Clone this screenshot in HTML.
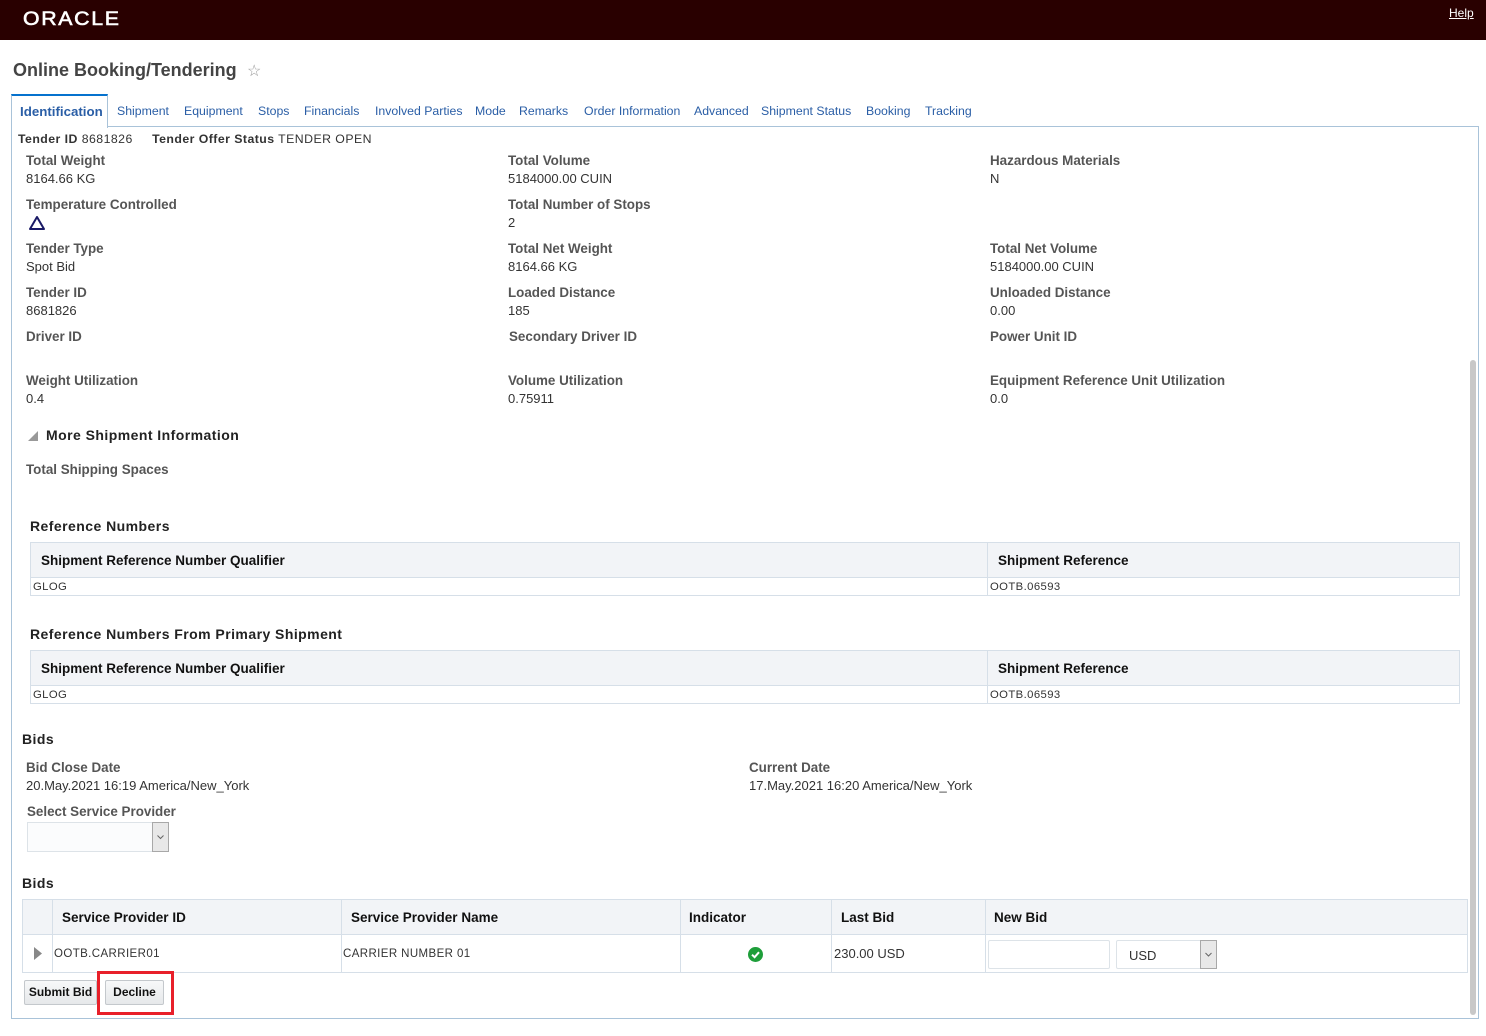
<!DOCTYPE html>
<html><head><meta charset="utf-8"><style>
*{box-sizing:border-box;margin:0;padding:0}
body{width:1486px;height:1036px;background:#fff;font-family:"Liberation Sans",Arial,sans-serif;position:relative;overflow:hidden;color:#333}
.a{position:absolute;white-space:nowrap}
.l{font-size:13.4px;font-weight:bold;color:#555}
.v{font-size:13px;color:#333}
.h{font-size:14px;font-weight:bold;color:#222;letter-spacing:0.45px}
.t{font-size:12.3px;color:#2a5ea6;top:104px}
.tbl{position:absolute;border:1px solid #d6dfe8}
.th{position:absolute;background:#f2f4f7;border-bottom:1px solid #d6dfe8}
.hd{position:absolute;font-size:13.5px;font-weight:bold;color:#111;white-space:nowrap}
.vl{position:absolute;width:1px;background:#d6dfe8;top:0;bottom:0}
.sm{font-size:11.3px;color:#333;letter-spacing:0.4px}
.btn{position:absolute;height:25px;border:1px solid #c4c8cc;background:linear-gradient(#f7f8f9,#e6e8ea);font-size:12px;font-weight:bold;color:#111;text-align:center;line-height:23px;border-radius:2px}
.dd{position:absolute;border:1px solid #a8a8a8;background:#e8e8e8}
</style></head><body>
<div class="a" style="left:0;top:0;width:1486px;height:40px;background:#290000"></div>
<div class="a" style="left:23px;top:9px;color:#fff;font-size:19px;letter-spacing:1.5px;transform:scaleX(1.12);transform-origin:left;-webkit-text-stroke:0.6px #fff">ORACLE</div>
<div class="a" style="left:1449px;top:6px;color:#fff;font-size:12px;text-decoration:underline">Help</div>

<div class="a" style="left:13px;top:60px;font-size:18px;font-weight:bold;color:#444">Online Booking/Tendering</div>
<div class="a" style="left:247px;top:61px;font-size:16px;color:#999">☆</div>

<div class="a" style="left:11px;top:126px;width:1468px;height:893px;border:1px solid #a9c3d9"></div>
<div class="a" style="left:11px;top:94px;width:97px;height:34px;border:1px solid #a9c3d9;border-top:2px solid #0572ce;border-bottom:none;background:#fff"></div>
<div class="a" style="left:20px;top:104px;font-size:13.3px;font-weight:bold;color:#2a5ea6">Identification</div>
<div class="a t" style="left:117px">Shipment</div>
<div class="a t" style="left:184px">Equipment</div>
<div class="a t" style="left:258px">Stops</div>
<div class="a t" style="left:304px">Financials</div>
<div class="a t" style="left:375px">Involved Parties</div>
<div class="a t" style="left:475px">Mode</div>
<div class="a t" style="left:519px">Remarks</div>
<div class="a t" style="left:584px">Order Information</div>
<div class="a t" style="left:694px">Advanced</div>
<div class="a t" style="left:761px">Shipment Status</div>
<div class="a t" style="left:866px">Booking</div>
<div class="a t" style="left:925px">Tracking</div>

<div class="a" style="left:1470px;top:360px;width:6px;height:655px;background:#c8c8c8;border-radius:3px"></div>

<div class="a" style="left:18px;top:132px;font-size:12.3px;color:#333;letter-spacing:0.45px"><b>Tender ID</b> 8681826 &nbsp;&nbsp;&nbsp;&nbsp;<b>Tender Offer Status</b> TENDER OPEN</div>

<div class="a l" style="left:26px;top:153px">Total Weight</div><div class="a v" style="left:26px;top:171px">8164.66 KG</div>
<div class="a l" style="left:508px;top:153px">Total Volume</div><div class="a v" style="left:508px;top:171px">5184000.00 CUIN</div>
<div class="a l" style="left:990px;top:153px">Hazardous Materials</div><div class="a v" style="left:990px;top:171px">N</div>

<div class="a l" style="left:26px;top:197px">Temperature Controlled</div>
<svg class="a" style="left:28px;top:215px" width="18" height="16"><path d="M9 2 L16 14 L2 14 Z" fill="none" stroke="#1a1a66" stroke-width="2" stroke-linejoin="round"/></svg>
<div class="a l" style="left:508px;top:197px">Total Number of Stops</div><div class="a v" style="left:508px;top:215px">2</div>

<div class="a l" style="left:26px;top:241px">Tender Type</div><div class="a v" style="left:26px;top:259px">Spot Bid</div>
<div class="a l" style="left:508px;top:241px">Total Net Weight</div><div class="a v" style="left:508px;top:259px">8164.66 KG</div>
<div class="a l" style="left:990px;top:241px">Total Net Volume</div><div class="a v" style="left:990px;top:259px">5184000.00 CUIN</div>

<div class="a l" style="left:26px;top:285px">Tender ID</div><div class="a v" style="left:26px;top:303px">8681826</div>
<div class="a l" style="left:508px;top:285px">Loaded Distance</div><div class="a v" style="left:508px;top:303px">185</div>
<div class="a l" style="left:990px;top:285px">Unloaded Distance</div><div class="a v" style="left:990px;top:303px">0.00</div>

<div class="a l" style="left:26px;top:329px">Driver ID</div>
<div class="a l" style="left:509px;top:329px">Secondary Driver ID</div>
<div class="a l" style="left:990px;top:329px">Power Unit ID</div>

<div class="a l" style="left:26px;top:373px">Weight Utilization</div><div class="a v" style="left:26px;top:391px">0.4</div>
<div class="a l" style="left:508px;top:373px">Volume Utilization</div><div class="a v" style="left:508px;top:391px">0.75911</div>
<div class="a l" style="left:990px;top:373px">Equipment Reference Unit Utilization</div><div class="a v" style="left:990px;top:391px">0.0</div>

<svg class="a" style="left:28px;top:431px" width="11" height="11"><path d="M10 0 L10 10 L0 10 Z" fill="#999"/></svg>
<div class="a h" style="left:46px;top:427px">More Shipment Information</div>
<div class="a l" style="left:26px;top:462px">Total Shipping Spaces</div>

<div class="a h" style="left:30px;top:518px">Reference Numbers</div>
<div class="tbl" style="left:30px;top:542px;width:1430px;height:54px">
<div class="th" style="left:0;top:0;width:100%;height:35px"></div>
<div class="vl" style="left:956px"></div>
<div class="hd" style="left:10px;top:10px">Shipment Reference Number Qualifier</div>
<div class="hd" style="left:967px;top:10px">Shipment Reference</div>
<div class="a sm" style="left:2px;top:38px">GLOG</div>
<div class="a sm" style="left:959px;top:38px">OOTB.06593</div>
</div>

<div class="a h" style="left:30px;top:626px">Reference Numbers From Primary Shipment</div>
<div class="tbl" style="left:30px;top:650px;width:1430px;height:54px">
<div class="th" style="left:0;top:0;width:100%;height:35px"></div>
<div class="vl" style="left:956px"></div>
<div class="hd" style="left:10px;top:10px">Shipment Reference Number Qualifier</div>
<div class="hd" style="left:967px;top:10px">Shipment Reference</div>
<div class="a sm" style="left:2px;top:38px">GLOG</div>
<div class="a sm" style="left:959px;top:38px">OOTB.06593</div>
</div>

<div class="a h" style="left:22px;top:731px">Bids</div>
<div class="a l" style="left:26px;top:760px">Bid Close Date</div><div class="a v" style="left:26px;top:778px">20.May.2021 16:19 America/New_York</div>
<div class="a l" style="left:749px;top:760px">Current Date</div><div class="a v" style="left:749px;top:778px">17.May.2021 16:20 America/New_York</div>
<div class="a l" style="left:27px;top:804px">Select Service Provider</div>
<div class="a" style="left:27px;top:822px;width:142px;height:30px;border:1px solid #dde3e8;background:#fbfcfd"></div>
<div class="dd" style="left:152px;top:822px;width:17px;height:30px"><svg width="15" height="28"><path d="M4.5 12.5 L7.5 15.5 L10.5 12.5" fill="none" stroke="#666" stroke-width="1"/></svg></div>

<div class="a h" style="left:22px;top:875px">Bids</div>
<div class="tbl" style="left:22px;top:899px;width:1446px;height:74px">
<div class="th" style="left:0;top:0;width:100%;height:35px"></div>
<div class="vl" style="left:29px"></div><div class="vl" style="left:318px"></div><div class="vl" style="left:657px"></div><div class="vl" style="left:808px"></div><div class="vl" style="left:962px"></div>
<div class="hd" style="left:39px;top:10px">Service Provider ID</div>
<div class="hd" style="left:328px;top:10px">Service Provider Name</div>
<div class="hd" style="left:666px;top:10px">Indicator</div>
<div class="hd" style="left:818px;top:10px">Last Bid</div>
<div class="hd" style="left:971px;top:10px">New Bid</div>
<svg class="a" style="left:11px;top:47px" width="8" height="13"><path d="M0 0 L8 6.5 L0 13 Z" fill="#888"/></svg>
<div class="a sm" style="left:31px;top:48px;font-size:11.5px">OOTB.CARRIER01</div>
<div class="a sm" style="left:320px;top:48px;font-size:11.5px">CARRIER NUMBER 01</div>
<svg class="a" style="left:725px;top:47px" width="15" height="15"><circle cx="7.5" cy="7.5" r="7.5" fill="#1e9e3a"/><path d="M4 7.7 L6.6 10.2 L11 5.2" fill="none" stroke="#fff" stroke-width="2"/></svg>
<div class="a v" style="left:811px;top:46px">230.00 USD</div>
<div class="a" style="left:965px;top:40px;width:122px;height:29px;border:1px solid #dde3e8;border-radius:2px"></div>
<div class="a" style="left:1093px;top:40px;width:101px;height:29px;border:1px solid #dde3e8;border-radius:2px"></div>
<div class="a v" style="left:1106px;top:48px">USD</div>
<div class="dd" style="left:1177px;top:40px;width:17px;height:29px"><svg width="15" height="27"><path d="M4.5 12 L7.5 15 L10.5 12" fill="none" stroke="#666" stroke-width="1"/></svg></div>
</div>

<div class="btn" style="left:24px;top:980px;width:73px">Submit Bid</div>
<div class="btn" style="left:105px;top:980px;width:59px">Decline</div>
<div class="a" style="left:97px;top:971px;width:77px;height:44px;border:3px solid #e8202a"></div>
</body></html>
